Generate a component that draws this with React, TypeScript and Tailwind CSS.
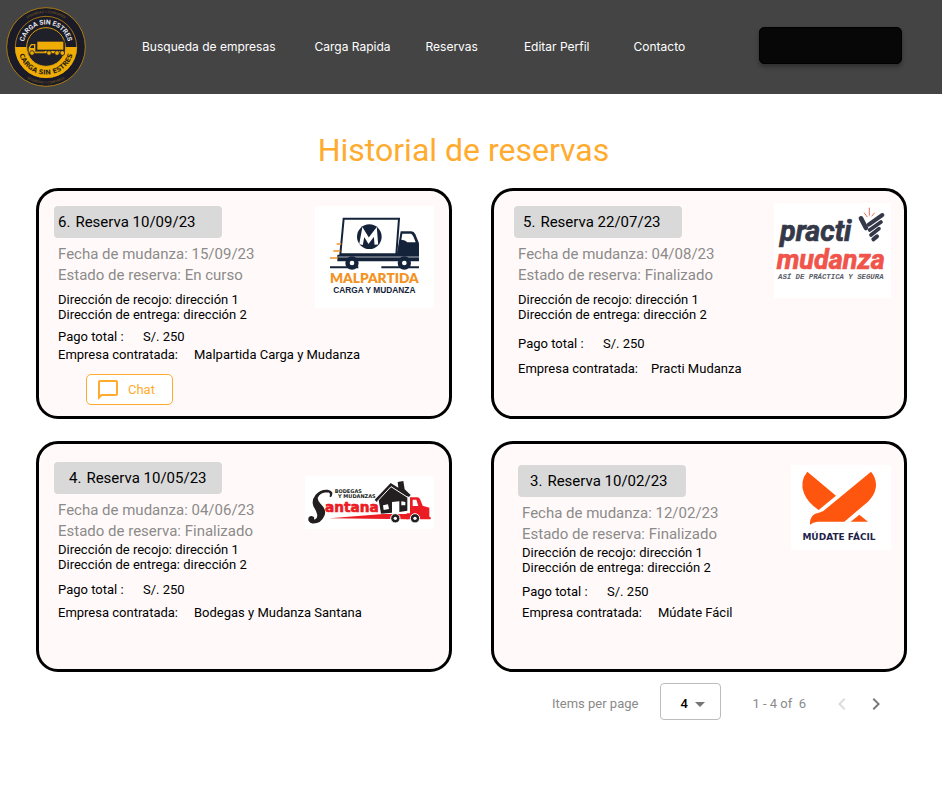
import type { ReactNode } from "react";

function BrandLogo() {
  return (
    <svg viewBox="18 22 240 240" className="size-20 shrink-0" role="img" aria-label="Carga sin estrés">
      <defs>
        <path id="top-outer" d="M 36 142 A 102 102 0 0 1 240 142" />
        <path id="top-inner" d="M 70 142 A 68 68 0 0 1 206 142" />
        <path id="bottom-inner" d="M 55 142 A 83 83 0 0 0 221 142" />
        <path id="bottom-outer" d="M 28 142 A 110 110 0 0 0 248 142" />
      </defs>
      <circle cx="138" cy="142" r="118" fill="#1b1a27" stroke="#a87a12" strokeWidth="3" />
      <circle cx="138" cy="142" r="92" fill="none" stroke="#b98612" strokeWidth="2.5" />
      <path d="M 45 142 A 93 93 0 0 0 231 142 Z" fill="#efac05" />
      <circle cx="138" cy="142" r="58" fill="#1f2029" stroke="#d99d0b" strokeWidth="3" />
      <g fontFamily="Roboto, sans-serif" textAnchor="middle">
        <text fontSize="10" fill="#7d6022">
          <textPath href="#top-outer" startOffset="50%">SEGURIDAD Y CONFIANZA</textPath>
        </text>
        <text fontSize="20" fontWeight="700" fill="#e9e9ee">
          <textPath href="#top-inner" startOffset="50%">CARGA SIN ESTRES</textPath>
        </text>
        <text fontFamily="'DejaVu Sans', sans-serif" fontSize="20" fontWeight="700" fill="#2b2413">
          <textPath href="#bottom-inner" startOffset="50%">CARGA SIN ESTRES</textPath>
        </text>
        <text fontSize="10" fill="#7d6022">
          <textPath href="#bottom-outer" startOffset="50%">SEGURIDAD Y CONFIANZA</textPath>
        </text>
      </g>
      <rect x="108" y="123" width="86" height="34" fill="#1f2029" />
      <rect x="112" y="126" width="78" height="24" fill="#efac05" />
      <path d="M 106 150 V 133 H 93 L 86 144 V 161 H 192 V 154 H 106 Z" fill="#efac05" />
      <path d="M 95 137 H 102 V 145 H 90 Z" fill="#1f2029" />
      <path d="M 106 156 H 134" stroke="#1f2029" strokeWidth="2" />
      {[96, 147, 171, 187].map((x) => (
        <circle key={x} cx={x} cy="160" r="7" fill="#efac05" stroke="#1f2029" strokeWidth="2.5" />
      ))}
    </svg>
  );
}

function MalpartidaLogo() {
  return (
    <svg viewBox="45 48 357 306" className="w-[119px] bg-white" role="img" aria-label="Malpartida Carga y Mudanza">
      <path d="M 131 86 H 297 L 289 193 H 121 Z" fill="#fff" stroke="#14233a" strokeWidth="6" />
      <circle cx="208" cy="140" r="37" fill="#14233a" />
      <path d="M 183 164 L 190 126 L 206 152 L 226 126 L 229 164" fill="none" stroke="#fff" strokeWidth="11" />
      <path d="M 302 124 H 334 Q 342 124 346 133 L 357 160 V 196 H 290 Z" fill="#14233a" />
      <path d="M 307 131 H 333 Q 337 132 342 144 L 347 157 H 322 Q 316 150 304 149 Z" fill="#fff" />
      <path d="M 112 194 H 357 V 214 H 112 Z" fill="#14233a" />
      <path d="M 115 201 H 357" stroke="#fff" strokeWidth="2" />
      <path d="M 90 232 H 175 M 244 232 H 357" stroke="#14233a" strokeWidth="6" />
      {[156, 313].map((x) => (
        <g key={x}>
          <circle cx={x} cy="219" r="20" fill="#14233a" />
          <circle cx={x} cy="219" r="7" fill="#fff" />
        </g>
      ))}
      <path d="M 110 162 H 124 M 100 183 H 121 M 90 204 H 113" stroke="#f39324" strokeWidth="5" />
      <text x="223" y="278" textAnchor="middle" fontFamily="Lato, sans-serif" fontSize="41" fontWeight="800" fill="#f39324">
        MALPARTIDA
      </text>
      <text x="223" y="309" textAnchor="middle" fontFamily="'Liberation Sans', sans-serif" fontSize="25" fontWeight="700" fill="#14233a">
        CARGA Y MUDANZA
      </text>
    </svg>
  );
}

function PractiLogo() {
  return (
    <svg viewBox="42 38 351 285" className="w-[117px] bg-white" role="img" aria-label="Practi Mudanza">
      <g fontFamily="Roboto, sans-serif" fontStyle="italic" fontWeight="700">
        <text x="60" y="151" fontSize="86" fill="#343848" stroke="#343848" strokeWidth="2">practi</text>
        <text x="50" y="237" fontSize="81" fill="#f0544a" stroke="#f0544a" strokeWidth="2">mudanza</text>
      </g>
      <text x="54" y="267" fontFamily="'Liberation Mono', monospace" fontStyle="italic" fontSize="22" fontWeight="700" fill="#5b5d68">
        ASÍ DE PRÁCTICA Y SEGURA
      </text>
      <g stroke="#343848" strokeLinecap="round" fill="none">
        <path d="M 303 84 L 318 113" strokeWidth="14" />
        <path d="M 326 103 L 367 74" strokeWidth="12" />
        <path d="M 329 119 L 363 95" strokeWidth="11" />
        <path d="M 333 134 L 357 115" strokeWidth="11" />
        <path d="M 340 147 L 351 138" strokeWidth="12" />
      </g>
      <path d="M 328 52 V 76 M 312 67 L 322 80 M 344 67 L 335 78" stroke="#ee6a60" strokeWidth="3" />
    </svg>
  );
}

function SantanaLogo() {
  return (
    <svg viewBox="45 48 387 159" className="w-[129px] bg-white" role="img" aria-label="Bodegas y Mudanzas Santana">
      <path d="M 118 175 L 280 162 H 355 V 178 Z" fill="#ec1c24" />
      <path d="M 360 112 H 381 Q 388 112 391 119 L 398 137 L 418 143 V 170 L 422 172 V 178 H 350 V 160 H 360 Z" fill="#ec1c24" />
      <path d="M 368 119 H 379 L 385 138 H 368 Z" fill="#fff" />
      <path d="M 323 66 L 340 63 L 344 88 L 362 105 L 357 111 L 352 108 V 152 L 328 156 V 124 L 306 126 V 158 L 273 161 L 266 120 L 260 126 L 254 119 L 302 69 L 325 83 Z" fill="#231f20" />
      <path d="M 262 124 L 303 80 L 353 112" fill="none" stroke="#fff" strokeWidth="3" />
      <path d="M 279 136 L 294 133 L 297 147 L 281 150 Z M 334 124 L 346 126 V 136 H 334 Z" fill="#fff" />
      {[316, 375].map((x) => (
        <g key={x}>
          <circle cx={x} cy="175" r="14" fill="#231f20" stroke="#fff" strokeWidth="3" />
          <circle cx={x} cy="175" r="5" fill="#fff" />
        </g>
      ))}
      <path d="M 121 110 Q 126 95 111 94 Q 88 95 81 112 Q 79 122 90 133 Q 108 150 101 166 Q 91 189 68 188 Q 55 185 58 174 Q 62 167 70 173 Q 69 182 75 181 Q 86 177 84 163 Q 82 152 73 139 Q 66 122 78 107 Q 93 90 113 92 Q 131 95 121 110 Z" fill="#231f20" stroke="#231f20" strokeWidth="5" />
      <text x="105" y="157" fontFamily="'DejaVu Sans', sans-serif" fontSize="41" fontWeight="700" fill="#ec1c24" stroke="#ec1c24" strokeWidth="2">
        antana
      </text>
      <g fontFamily="'DejaVu Sans', sans-serif" fontSize="15" fontWeight="700" fill="#231f20">
        <text x="134" y="100">BODEGAS</text>
        <text x="144" y="114">Y MUDANZAS</text>
      </g>
    </svg>
  );
}

function MudateLogo() {
  return (
    <svg viewBox="33 45 300 255" className="w-[100px] bg-white" role="img" aria-label="Múdate Fácil">
      <g fill="#ff560f">
        <path d="M 82 65 L 168 137 L 116 180 Q 84 160 72 130 Q 58 94 82 65 Z" />
        <path d="M 273 65 Q 292 88 287 115 Q 283 137 264 155 L 193 215 H 113 Q 98 216 90 224 Q 88 200 106 191 Q 120 188 130 183 Z" />
        <path d="M 238 194 L 264 215 H 212 Z" />
      </g>
      <text x="177" y="270" textAnchor="middle" fontFamily="'DejaVu Sans', sans-serif" fontSize="27" fontWeight="700" fill="#231f4b">
        MÚDATE FÁCIL
      </text>
    </svg>
  );
}

type Reserva = {
  numero: number;
  reservada: string;
  mudanza: string;
  estado: string;
  empresa: string;
  logo: ReactNode;
  chat?: boolean;
  padding: string;
  badge: string;
  logoPlace: string;
  direccion: string;
  pago: string;
  contrato: string;
  etiqueta: string;
};

const reservas: Reserva[] = [
  {
    numero: 6,
    reservada: "10/09/23",
    mudanza: "15/09/23",
    estado: "En curso",
    empresa: "Malpartida Carga y Mudanza",
    logo: <MalpartidaLogo />,
    chat: true,
    padding: "pl-[15px] pt-[15px]",
    badge: "pl-1",
    logoPlace: "mr-[15px]",
    direccion: "mt-1.5",
    pago: "mt-[7px]",
    contrato: "mt-[3px]",
    etiqueta: "w-[136px]",
  },
  {
    numero: 5,
    reservada: "22/07/23",
    mudanza: "04/08/23",
    estado: "Finalizado",
    empresa: "Practi Mudanza",
    logo: <PractiLogo />,
    padding: "pl-5 pt-[15px]",
    badge: "pl-[9px]",
    logoPlace: "mr-[13px] -mt-[3px]",
    direccion: "mt-1.5",
    pago: "mt-3.5",
    contrato: "mt-2.5",
    etiqueta: "w-[133px]",
  },
  {
    numero: 4,
    reservada: "10/05/23",
    mudanza: "04/06/23",
    estado: "Finalizado",
    empresa: "Bodegas y Mudanza Santana",
    logo: <SantanaLogo />,
    padding: "pl-[15px] pt-[18px]",
    badge: "pl-[15px]",
    logoPlace: "mr-[15px] mt-3.5",
    direccion: "mt-0",
    pago: "mt-2.5",
    contrato: "mt-2",
    etiqueta: "w-[136px]",
  },
  {
    numero: 3,
    reservada: "10/02/23",
    mudanza: "12/02/23",
    estado: "Finalizado",
    empresa: "Múdate Fácil",
    logo: <MudateLogo />,
    padding: "pl-6 pt-[21px]",
    badge: "pl-3",
    logoPlace: "mr-[13px]",
    direccion: "mt-0",
    pago: "mt-[9px]",
    contrato: "mt-1.5",
    etiqueta: "w-[136px]",
  },
];

function ReservaCard({ r }: { r: Reserva }) {
  return (
    <article
      className={`flex min-h-[231px] items-start rounded-[22px] border-3 border-black bg-[#fffaf9] whitespace-nowrap ${r.padding}`}
    >
      <div className="min-w-0 flex-1">
        <h2 className={`flex h-8 w-42 items-center gap-[5px] rounded bg-[#d9d9d9] text-[15px] ${r.badge}`}>
          <span>{r.numero}.</span>
          <span>Reserva {r.reservada}</span>
        </h2>
        <div className="pl-1 text-[13px] leading-[15px]">
          <div className="mt-1.5 text-[15px] leading-[21px] text-[#8c8a8a]">
            <p>Fecha de mudanza: {r.mudanza}</p>
            <p>Estado de reserva: {r.estado}</p>
          </div>
          <div className={r.direccion}>
            <p>Dirección de recojo: dirección 1</p>
            <p>Dirección de entrega: dirección 2</p>
          </div>
          <p className={`flex ${r.pago}`}>
            <span className="w-[85px] shrink-0">Pago total :</span>
            <span>S/. 250</span>
          </p>
          <p className={`flex ${r.contrato}`}>
            <span className={`shrink-0 ${r.etiqueta}`}>Empresa contratada:</span>
            <span>{r.empresa}</span>
          </p>
          {r.chat && (
            <button
              type="button"
              className="mt-3 ml-7 flex h-[31px] w-[87px] items-center gap-2 rounded-[5px] border border-[#ffab2e] bg-white pl-[9px] text-[#ffab2e]"
            >
              <svg viewBox="0 0 24 24" className="size-6" fill="currentColor" aria-hidden="true">
                <path d="M20 2H4c-1.100 0-2 .9-2 2v18l4-4h14c1.100 0 2-.9 2-2V4c0-1.100-.9-2-2-2zm0 14H5.200L4 17.200V4h16v12z" />
              </svg>
              Chat
            </button>
          )}
        </div>
      </div>
      <div className={`shrink-0 ${r.logoPlace}`}>{r.logo}</div>
    </article>
  );
}

const enlaces = [
  { texto: "Busqueda de empresas", margen: "ml-14" },
  { texto: "Carga Rapida", margen: "ml-[39px]" },
  { texto: "Reservas", margen: "ml-[35px]" },
  { texto: "Editar Perfil", margen: "ml-[46px]" },
  { texto: "Contacto", margen: "ml-11" },
];

export default function App() {
  return (
    <div className="min-h-screen bg-white font-[Roboto,sans-serif] text-black">
      <header className="flex h-[94px] items-center bg-[#444444] pr-10 pl-1.5">
        <BrandLogo />
        <nav className="flex font-[Inter,sans-serif] text-xs whitespace-nowrap text-white">
          {enlaces.map((e) => (
            <a key={e.texto} href="#" className={e.margen}>
              {e.texto}
            </a>
          ))}
        </nav>
        <button
          type="button"
          aria-label="Cuenta"
          className="mb-[3px] ml-auto h-[37px] w-[143px] rounded-[5px] border border-black bg-[#070707] shadow-[0_3px_4px_rgba(0,0,0,0.3)]"
        />
      </header>
      <main className="pr-[35px] pl-9">
        <h1 className="pt-9 pr-4 text-center text-[32px] leading-10 text-[#ffab2e]">Historial de reservas</h1>
        <section className="mt-[18px] grid grid-cols-2 gap-x-[39px] gap-y-[22px]">
          {reservas.map((r) => (
            <ReservaCard key={r.numero} r={r} />
          ))}
        </section>
        <footer className="mt-[11px] flex items-center justify-end pr-[19px] text-[13px] text-[#8a8a8a]">
          <label htmlFor="por-pagina" className="mt-1">
            Items per page
          </label>
          <div className="relative ml-[22px]">
            <select
              id="por-pagina"
              defaultValue="4"
              className="block h-[37px] w-[61px] appearance-none rounded border border-[#bdbdbd] bg-white pt-1 pl-[19px] font-medium text-black"
            >
              <option>4</option>
              <option>8</option>
            </select>
            <svg viewBox="0 0 10 5" className="pointer-events-none absolute top-[19px] right-4 w-2.5" aria-hidden="true">
              <path d="M0 0h10L5 5z" fill="#757575" />
            </svg>
          </div>
          <span className="mt-1 ml-[31px] whitespace-pre">1 - 4 of  6</span>
          <button type="button" aria-label="Página anterior" disabled className="mt-1 ml-6 text-[#dcdcdc]">
            <svg viewBox="0 0 24 24" className="size-6" fill="currentColor" aria-hidden="true">
              <path d="M15.410 7.410 14 6l-6 6 6 6 1.410-1.410L10.830 12z" />
            </svg>
          </button>
          <button type="button" aria-label="Página siguiente" className="mt-1 ml-2.5 text-[#7a7a7a]">
            <svg viewBox="0 0 24 24" className="size-6" fill="currentColor" aria-hidden="true">
              <path d="M10 6 8.590 7.410 13.170 12l-4.580 4.590L10 18l6-6z" />
            </svg>
          </button>
        </footer>
      </main>
    </div>
  );
}
